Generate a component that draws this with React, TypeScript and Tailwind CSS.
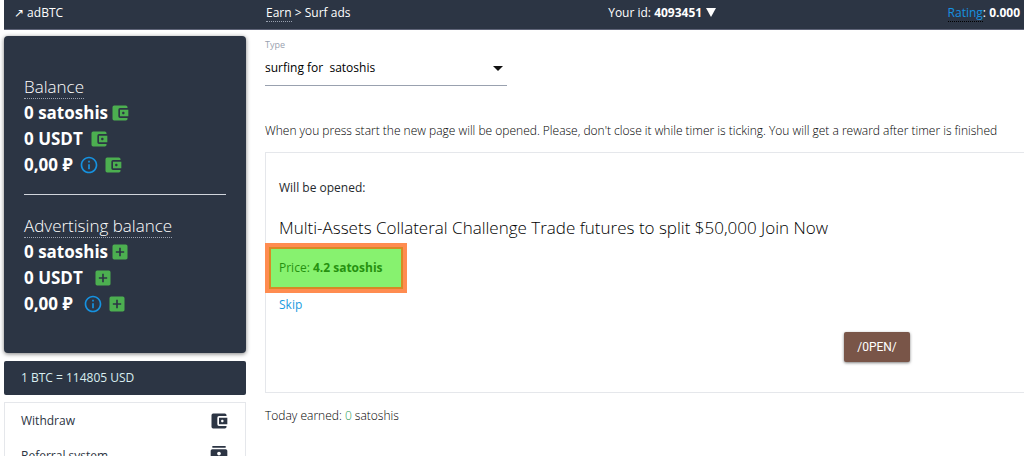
import type { ReactNode } from 'react'
import { MdAccountBalanceWallet, MdAddBox, MdContacts, MdInfoOutline } from 'react-icons/md'

interface BalanceRowProps {
  amount: string
  children: ReactNode
}

function BalanceRow({ amount, children }: BalanceRowProps) {
  return (
    <div className="flex h-[26px] items-center text-[17px] font-bold text-white">
      <span>{amount}</span>
      {children}
    </div>
  )
}

function BalanceTitle({ children }: { children: ReactNode }) {
  return (
    <h2 className="flex h-[26px] items-center">
      <span className="border-b border-dotted border-gray-400 text-[17px] leading-[22px] font-[340] text-white">
        {children}
      </span>
    </h2>
  )
}

function WalletButton({ className = 'ml-1' }: { className?: string }) {
  return (
    <button type="button" aria-label="Withdraw" className={className}>
      <MdAccountBalanceWallet className="size-5 text-[#4caf50]" />
    </button>
  )
}

function AddButton({ className = 'ml-1' }: { className?: string }) {
  return (
    <button type="button" aria-label="Add funds" className={className}>
      <MdAddBox className="size-5 text-[#4caf50]" />
    </button>
  )
}

const MENU = [
  { label: 'Withdraw', icon: MdAccountBalanceWallet },
  { label: 'Referral system', icon: MdContacts },
]

function Sidebar() {
  return (
    <aside className="w-[242px] shrink-0">
      <section className="rounded-sm bg-[#2c3544] px-5 pt-[38px] pb-9 shadow-[0_1px_4px_rgba(0,0,0,0.5)]">
        <BalanceTitle>Balance</BalanceTitle>
        <BalanceRow amount="0 satoshis">
          <WalletButton className="ml-0.5" />
        </BalanceRow>
        <BalanceRow amount="0 USDT">
          <WalletButton className="ml-1.5" />
        </BalanceRow>
        <BalanceRow amount="0,00 ₽">
          <MdInfoOutline className="ml-1.5 size-5 text-[#1692e0]" />
          <WalletButton />
        </BalanceRow>
        <hr className="mt-4 mb-[18px] border-gray-300" />
        <BalanceTitle>Advertising balance</BalanceTitle>
        <BalanceRow amount="0 satoshis">
          <AddButton className="ml-0.5" />
        </BalanceRow>
        <BalanceRow amount="0 USDT">
          <AddButton className="ml-2.5" />
        </BalanceRow>
        <BalanceRow amount="0,00 ₽">
          <MdInfoOutline className="ml-2.5 size-5 text-[#1692e0]" />
          <AddButton />
        </BalanceRow>
      </section>

      <p className="mt-2 rounded-xs bg-[#2c3544] px-[17px] py-2 text-xs leading-[18px] text-[#d9eef0]">
        1 BTC = 114805 USD
      </p>

      <nav className="mt-[7px] border border-gray-200 text-xs text-[#2c3544]">
        {MENU.map(({ label, icon: Icon }) => (
          <a key={label} href="#" className="flex h-[35px] items-center justify-between px-4">
            {label}
            <Icon className="size-5" />
          </a>
        ))}
      </nav>
    </aside>
  )
}

export default function App() {
  return (
    <div className="h-screen overflow-hidden bg-white pl-1 font-['Open_Sans','Noto_Sans',sans-serif] text-xs text-[#24292e]">
      <header className="grid h-[30px] grid-cols-[262px_344fr_414fr] items-center border-b border-[#5f6478] bg-[#2c3544] pr-1 pb-1 text-white">
        <a href="#" className="pl-2.5">
          ↗ adBTC
        </a>
        <div>
          <a href="#" className="border-b border-dotted border-gray-400">
            Earn
          </a>{' '}
          &gt; Surf ads
        </div>
        <div className="flex items-center justify-between">
          <button type="button" className="flex items-center gap-1">
            <span>
              Your id: <b>4093451</b>
            </span>
            <svg viewBox="0 0 10 9" className="h-[9px] w-2.5">
              <path d="M0 0h10L5 9z" fill="#fff" />
            </svg>
          </button>
          <span>
            <a href="#" className="border-b border-dotted border-black text-[#1692e0]">
              Rating
            </a>
            : <b>0.000</b>
          </span>
        </div>
      </header>

      <div className="flex gap-[19px] pt-1.5">
        <Sidebar />
        <main className="min-w-0 flex-1">
          <div className="w-[242px]">
            <label htmlFor="type" className="block text-[9px] leading-[18px] text-gray-400">
              Type
            </label>
            <div className="relative">
              <select
                id="type"
                className="block h-8 w-full appearance-none border-b border-gray-400 pb-1 text-xs text-black outline-none"
              >
                <option>surfing for{'\u00a0\u00a0'}satoshis</option>
              </select>
              <svg viewBox="0 0 10 5" className="pointer-events-none absolute top-3 right-1 h-[5px] w-2.5">
                <path d="M0 0h10L5 5z" fill="#111" />
              </svg>
            </div>
          </div>

          <p className="mt-9 leading-[18px] font-[340] whitespace-nowrap text-black">
            When you press start the new page will be opened. Please, don't close it while timer is ticking. You will
            get a reward after timer is finished
          </p>

          <section className="mt-3 border border-r-0 border-gray-200 pt-[26px] pb-[30px]">
            <p className="px-[13px] leading-[18px]">Will be opened:</p>
            <h1 className="mt-5 px-[13px] text-[17px] leading-[22px] font-[340] text-black">
              Multi-Assets Collateral Challenge Trade futures to split $50,000 Join Now
            </h1>
            <p className="mt-1 -ml-px flex h-[50px] w-[142px] items-center border-4 border-[#ff8c50] bg-[#87f26f] px-2.5 text-[#26910f] shadow-[inset_0_0_0_2px_#d88a24]">
              <span>
                Price: <b>4.2 satoshis</b>
              </span>
            </p>
            <a href="#" className="mt-[3px] block px-[13px] leading-[18px] text-[#1b9be0]">
              Skip
            </a>
            <div className="mt-[18px] flex justify-end pr-[114px]">
              <button
                type="button"
                className="h-[30px] w-[66px] rounded-xs bg-[#795548] font-['Roboto'] text-xs text-white shadow-[0_1px_3px_rgba(0,0,0,0.5)]"
              >
                /0PEN/
              </button>
            </div>
          </section>

          <p className="mt-3.5 leading-[18px] font-[340] text-black">
            Today earned: <span className="text-[#2e9e5b]">0</span> satoshis
          </p>
        </main>
      </div>
    </div>
  )
}
